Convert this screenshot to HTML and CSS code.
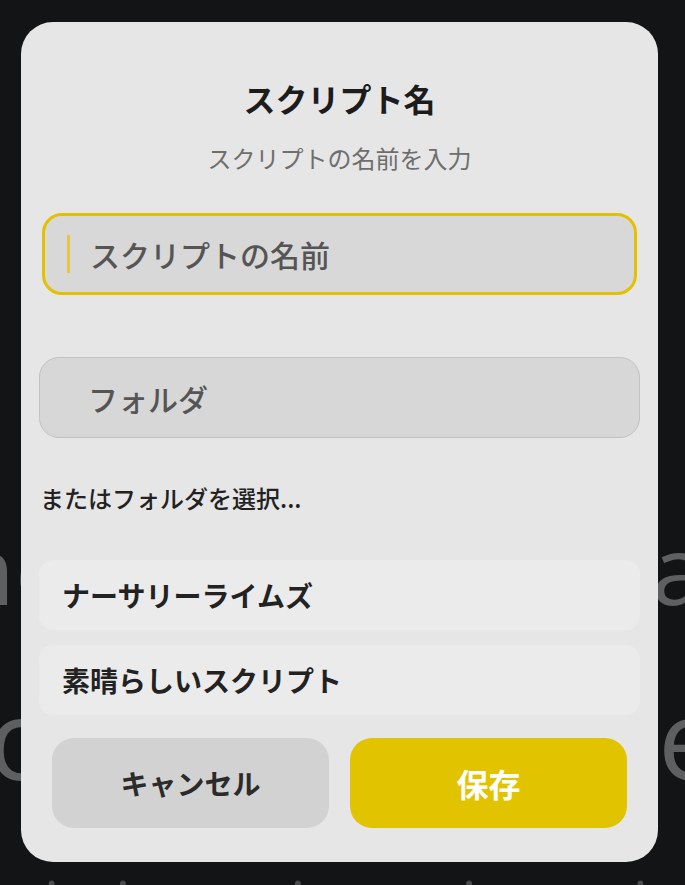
FILE: index.html
```html
<!DOCTYPE html>
<html lang="ja">
<head>
    <meta charset="UTF-8">
    <title>スクリプト名</title>
    <link rel="stylesheet" href="styles.css">
</head>
<body>
    <div class="backdrop">
        <div class="bg-line line-one"><span>nc</span><span>a</span></div>
        <div class="bg-line line-two"><span>c</span><span>e</span></div>
        <div class="bg-line line-three"><span>i</span><span>i</span><span>i</span><span>i</span><span>i</span></div>
    </div>

    <div class="dialog">
        <h1 class="dialog-title">スクリプト名</h1>
        <p class="dialog-subtitle">スクリプトの名前を入力</p>

        <div class="field field-focused">
            <span class="caret"></span>
            <span class="placeholder">スクリプトの名前</span>
        </div>

        <div class="field field-folder">
            <span class="placeholder">フォルダ</span>
        </div>

        <div class="section-label">またはフォルダを選択...</div>

        <div class="folder-item">ナーサリーライムズ</div>
        <div class="folder-item second">素晴らしいスクリプト</div>

        <div class="actions">
            <button class="btn btn-cancel">キャンセル</button>
            <button class="btn btn-save">保存</button>
        </div>
    </div>
</body>
</html>
```

FILE: styles.css
```css
html, body {
    margin: 0;
    padding: 0;
}
body {
    width: 685px;
    height: 885px;
    overflow: hidden;
    position: relative;
    background-color: #131416;
    font-family: "Noto Sans CJK JP", "Noto Sans", sans-serif;
}
.backdrop {
    display: flex;
    flex-direction: column;
    color: #5e5f61;
    font-family: "Open Sans", "Noto Sans", sans-serif;
}
.bg-line {
    display: flex;
    justify-content: space-between;
    white-space: nowrap;
}
.line-one {
    font-size: 96px;
    line-height: 100px;
    margin-top: 518px;
    margin-left: -44px;
    margin-right: -20px;
}
.line-two {
    font-size: 112px;
    line-height: 110px;
    margin-top: 64px;
    margin-left: -12px;
    margin-right: -36px;
}
.line-three {
    justify-content: flex-start;
    font-size: 60px;
    line-height: 60px;
    margin-top: 80px;
    color: #4a4b4d;
}
.line-three span:nth-child(1) { margin-left: 44px; }
.line-three span:nth-child(2) { margin-left: 56px; }
.line-three span:nth-child(3) { margin-left: 160px; }
.line-three span:nth-child(4) { margin-left: 156px; }
.line-three span:nth-child(5) { margin-left: 156px; }
.dialog {
    position: absolute;
    top: 22px;
    left: 21px;
    width: 637px;
    height: 840px;
    box-sizing: border-box;
    padding: 58px 18px 0 18px;
    background-color: #e6e6e6;
    border-radius: 32px;
}
.dialog-title {
    margin: 0;
    font-size: 32px;
    line-height: 36px;
    font-weight: bold;
    text-align: center;
    color: #1c1c1c;
}
.dialog-subtitle {
    margin: 28px 0 0 0;
    font-size: 24px;
    line-height: 28px;
    text-align: center;
    color: #6e6e6e;
}
.field {
    display: flex;
    align-items: center;
    box-sizing: border-box;
    background-color: #d8d8d8;
    border-radius: 20px;
}
.field-focused {
    margin: 41px 3px 0 3px;
    height: 82px;
    border: 3px solid #e3c000;
    padding-left: 22px;
}
.caret {
    width: 3px;
    height: 38px;
    background-color: #e6c640;
    margin-right: 20px;
}
.field-folder {
    margin-top: 62px;
    height: 81px;
    border: 1px solid #c2c2c2;
    padding-left: 48px;
    background-color: #d7d7d7;
}
.placeholder {
    font-size: 30px;
    color: #555;
    font-weight: 500;
}
.section-label {
    margin-top: 46px;
    font-size: 24px;
    line-height: 28px;
    font-weight: 500;
    color: #222;
    margin-left: 1px;
}
.folder-item {
    margin-top: 48px;
    height: 70px;
    display: flex;
    align-items: center;
    padding-left: 23px;
    border-radius: 14px;
    background-color: #ebebeb;
    font-size: 28px;
    font-weight: bold;
    color: #222;
}
.folder-item.second {
    margin-top: 15px;
}
.actions {
    display: flex;
    gap: 21px;
    margin: 23px 13px 0 13px;
}
.btn {
    flex: 1;
    height: 90px;
    border: none;
    border-radius: 22px;
    font-family: "Noto Sans CJK JP", "Noto Sans", sans-serif;
    font-size: 28px;
    font-weight: bold;
    cursor: pointer;
}
.btn-cancel {
    background-color: #d2d2d2;
    color: #2b2b2b;
}
.btn-save {
    background-color: #e2c300;
    color: #fff;
    font-size: 32px;
}
```
